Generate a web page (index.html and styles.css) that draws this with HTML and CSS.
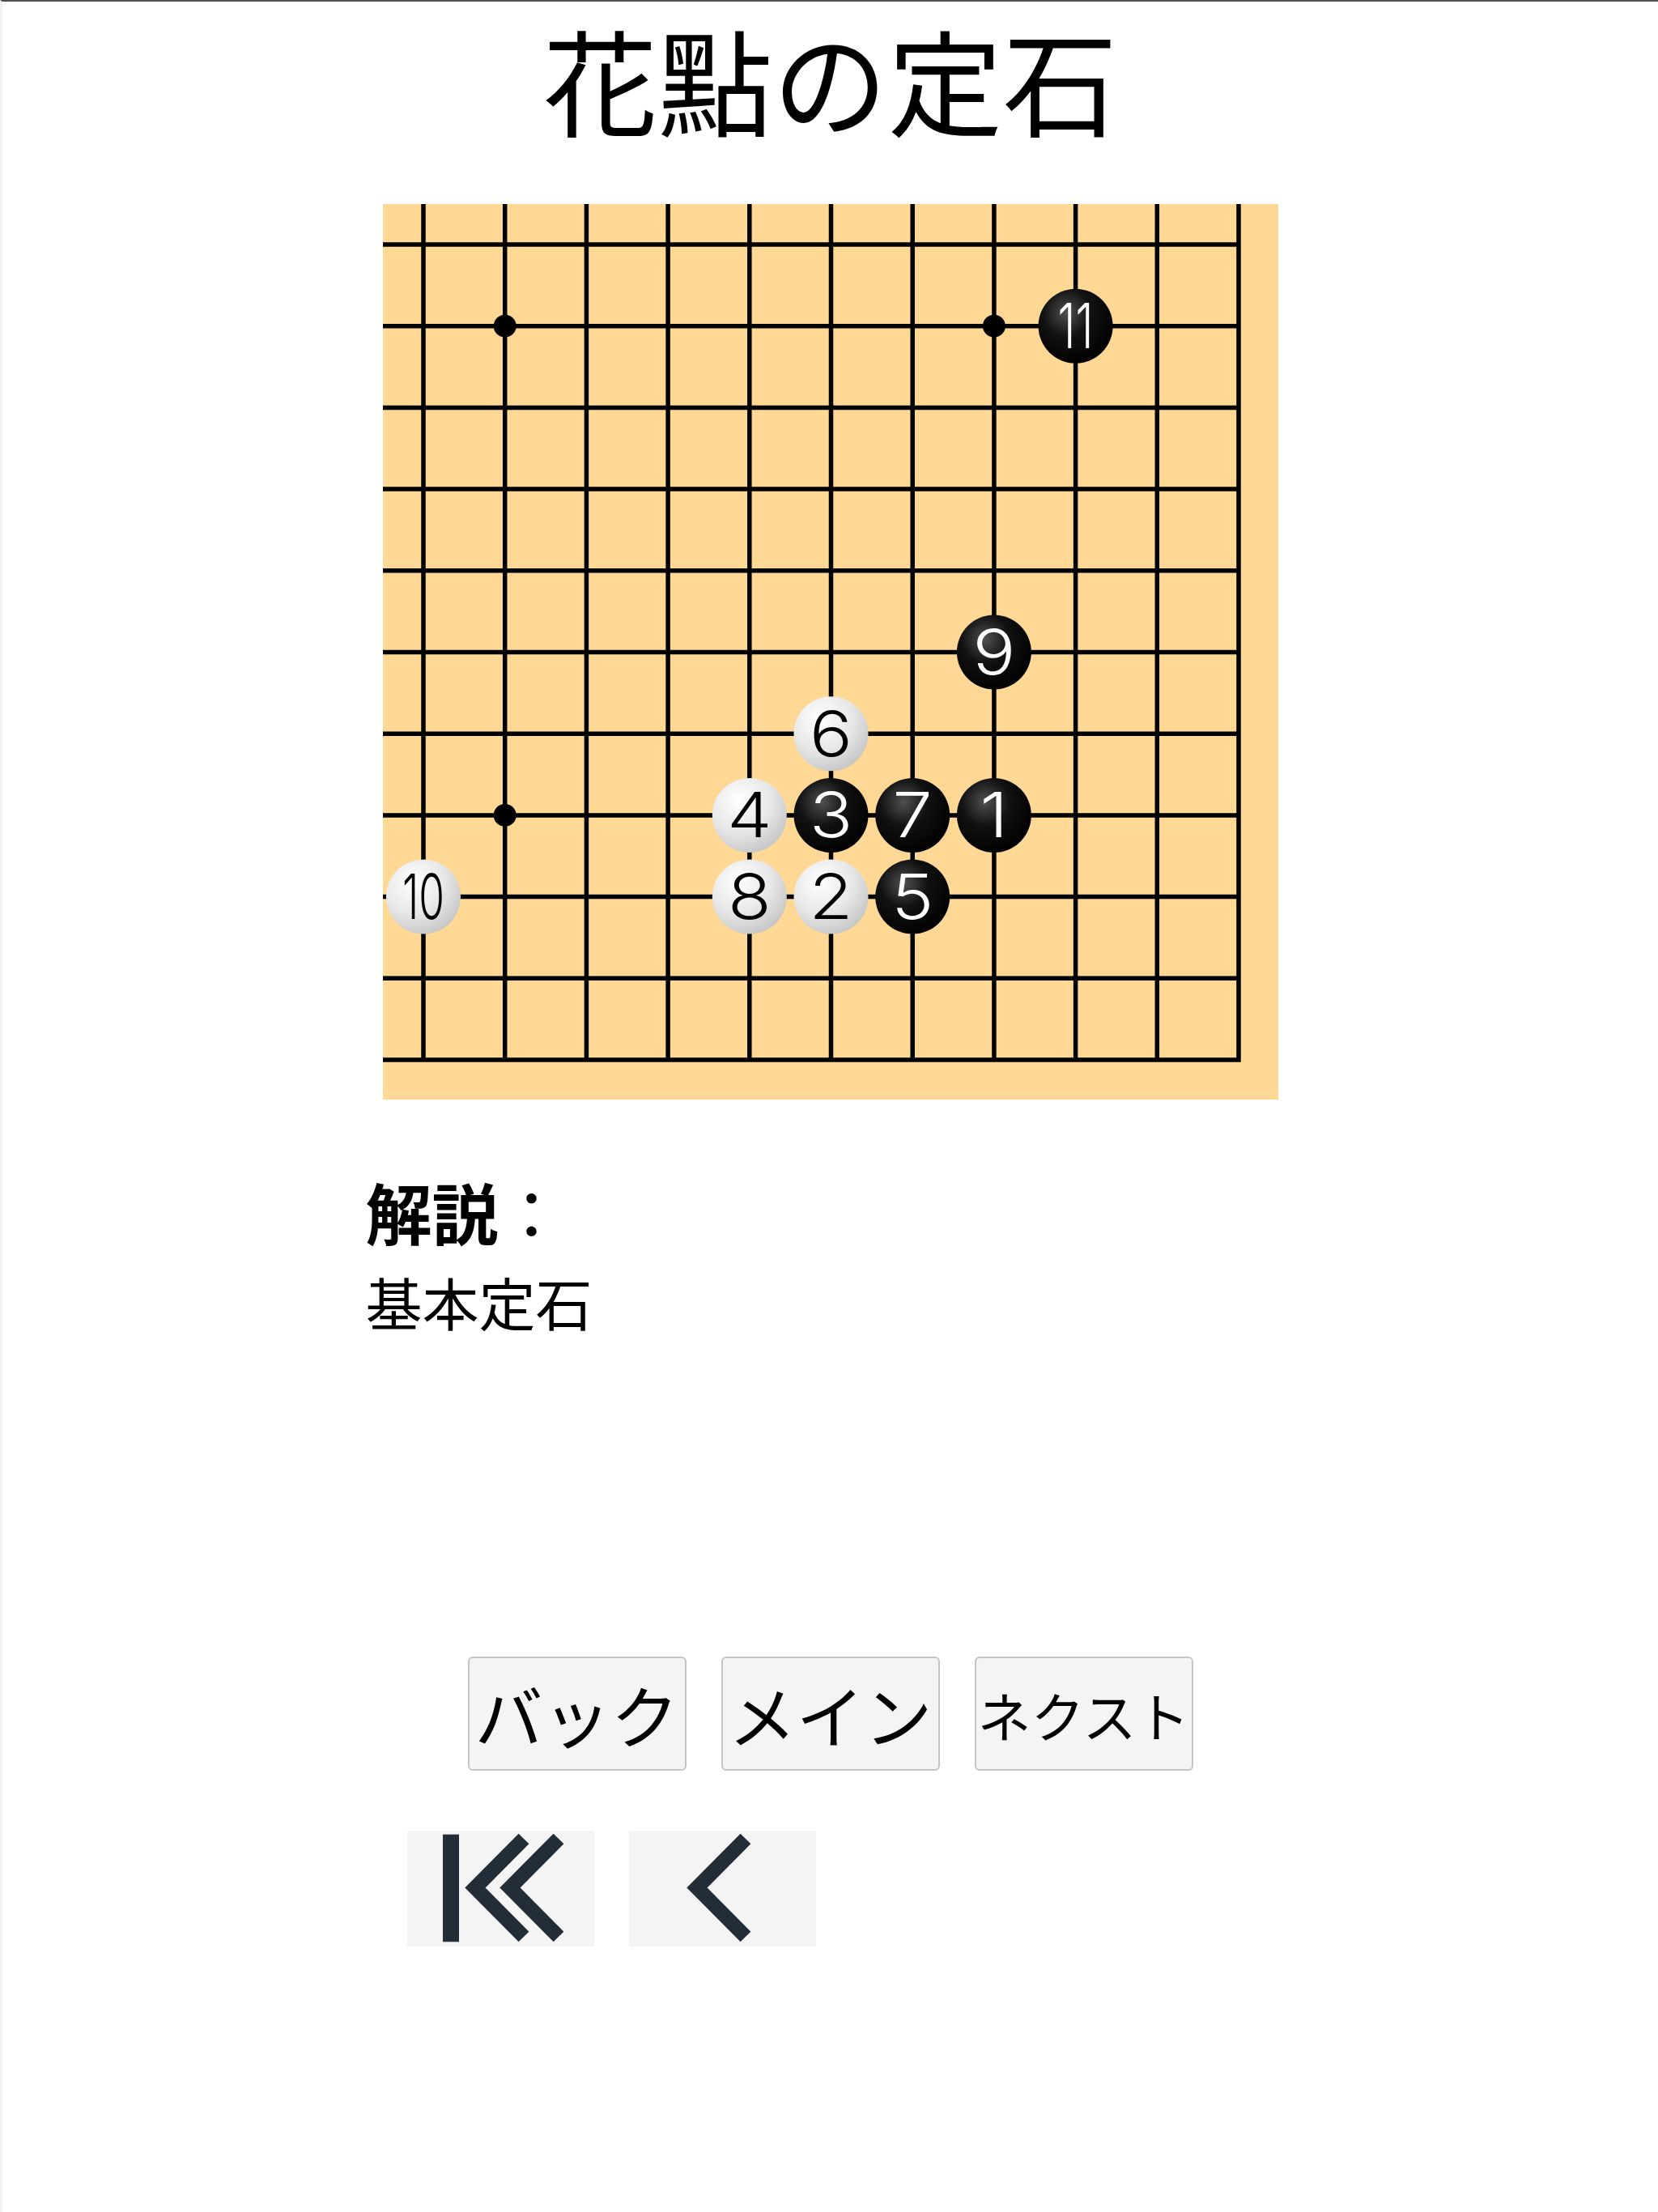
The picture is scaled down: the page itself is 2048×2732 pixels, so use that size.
FILE: index.html
```html
<!DOCTYPE html>
<html lang="ja">
<head>
<meta charset="utf-8">
<title>花點の定石</title>
<link rel="stylesheet" href="styles.css">
</head>
<body>
<div class="page">
  <header class="title-bar">
    <h1 class="title">花點の定石</h1>
  </header>

  <div class="board-wrap">
    <svg class="board" width="1106" height="1106" viewBox="0 0 1106 1106" xmlns="http://www.w3.org/2000/svg">
      <defs>
        <radialGradient id="gB" cx="0.38" cy="0.32" r="0.72">
          <stop offset="0" stop-color="#505050"/>
          <stop offset="0.45" stop-color="#111111"/>
          <stop offset="1" stop-color="#000000"/>
        </radialGradient>
        <radialGradient id="gW" cx="0.36" cy="0.3" r="0.78">
          <stop offset="0" stop-color="#ffffff"/>
          <stop offset="0.55" stop-color="#e7e7e7"/>
          <stop offset="1" stop-color="#c2c2c2"/>
        </radialGradient>
      </defs>
      <rect class="board-bg" x="0" y="0" width="1106" height="1106"/>
      <path class="grid" d="M0 50H1059.75 M0 150.7H1059.75 M0 251.4H1059.75 M0 352.1H1059.75 M0 452.8H1059.75 M0 553.5H1059.75 M0 654.2H1059.75 M0 754.9H1059.75 M0 855.6H1059.75 M0 956.3H1059.75 M0 1057H1059.75 M50 0V1059.75 M150.7 0V1059.75 M251.4 0V1059.75 M352.1 0V1059.75 M452.8 0V1059.75 M553.5 0V1059.75 M654.2 0V1059.75 M754.9 0V1059.75 M855.6 0V1059.75 M956.3 0V1059.75 M1057 0V1059.75"/>
      <circle class="hoshi" cx="150.7" cy="150.7" r="14"/>
      <circle class="hoshi" cx="754.9" cy="150.7" r="14"/>
      <circle class="hoshi" cx="150.7" cy="754.9" r="14"/>

      <circle cx="855.6" cy="150.7" r="46" fill="url(#gB)"/>
      <text class="num num-b num-pair" x="855.6" y="178.2" textLength="44" lengthAdjust="spacingAndGlyphs">11</text>

      <circle cx="754.9" cy="553.5" r="46" fill="url(#gB)"/>
      <text class="num num-b" x="754.9" y="581">9</text>

      <circle cx="553.5" cy="654.2" r="46" fill="url(#gW)"/>
      <text class="num num-w" x="553.5" y="681.7">6</text>

      <circle cx="452.8" cy="754.9" r="46" fill="url(#gW)"/>
      <text class="num num-w" x="452.8" y="782.4">4</text>
      <circle cx="553.5" cy="754.9" r="46" fill="url(#gB)"/>
      <text class="num num-b" x="553.5" y="782.4">3</text>
      <circle cx="654.2" cy="754.9" r="46" fill="url(#gB)"/>
      <text class="num num-b" x="654.2" y="782.4">7</text>
      <circle cx="754.9" cy="754.9" r="46" fill="url(#gB)"/>
      <text class="num num-b" x="754.9" y="782.4">1</text>

      <circle cx="50" cy="855.6" r="46" fill="url(#gW)"/>
      <text class="num num-w num-pair" x="50" y="883.1" textLength="52" lengthAdjust="spacingAndGlyphs">10</text>
      <circle cx="452.8" cy="855.6" r="46" fill="url(#gW)"/>
      <text class="num num-w" x="452.8" y="883.1">8</text>
      <circle cx="553.5" cy="855.6" r="46" fill="url(#gW)"/>
      <text class="num num-w" x="553.5" y="883.1">2</text>
      <circle cx="654.2" cy="855.6" r="46" fill="url(#gB)"/>
      <text class="num num-b" x="654.2" y="883.1">5</text>
    </svg>
  </div>

  <section class="comment">
    <h3 class="comment-head"><span class="comment-label">解説</span>：</h3>
    <p class="comment-body">基本定石</p>
  </section>

  <div class="nav-text">
    <button class="text-btn" type="button">バック</button>
    <button class="text-btn" type="button">メイン</button>
    <button class="text-btn text-btn-small" type="button">ネクスト</button>
  </div>

  <div class="nav-icons">
    <button class="icon-btn" type="button" aria-label="最初へ">
      <svg width="231" height="143" viewBox="0 0 231 143" xmlns="http://www.w3.org/2000/svg">
        <rect class="icon-fill" x="44" y="4.7" width="20" height="132.6"/>
        <polyline class="icon-stroke" points="144,10 84,70.5 144,131"/>
        <polyline class="icon-stroke" points="187,10 127,70.5 187,131"/>
      </svg>
    </button>
    <button class="icon-btn" type="button" aria-label="前へ">
      <svg width="231" height="143" viewBox="0 0 231 143" xmlns="http://www.w3.org/2000/svg">
        <polyline class="icon-stroke" points="144,10 84,70.5 144,131"/>
      </svg>
    </button>
    <button class="icon-btn icon-btn-hidden" type="button" aria-label="次へ"></button>
    <button class="icon-btn icon-btn-hidden" type="button" aria-label="最後へ"></button>
  </div>
</div>
</body>
</html>
```

FILE: styles.css
```css
html, body {
  margin: 0;
  padding: 0;
  background: #ffffff;
}

body {
  font-family: "Noto Sans CJK JP", "Noto Sans", sans-serif;
  color: #000000;
}

.page {
  min-height: 2730px;
  border-top: 2px solid #4f4f4f;
  border-left: 3px solid #f3f3f3;
  display: flex;
  flex-direction: column;
  align-items: center;
}

.title-bar {
  align-self: stretch;
  padding-top: 9px;
  display: flex;
  justify-content: center;
}

.title {
  margin: 0;
  padding: 0 20px;
  font-size: 142px;
  line-height: 170px;
  font-weight: 400;
  text-align: center;
  white-space: nowrap;
}

.board-wrap {
  margin-top: 71px;
  width: 1106px;
  height: 1106px;
}

.board {
  display: block;
}

.board-bg {
  fill: #fed894;
}

.grid {
  stroke: #000000;
  stroke-width: 5.5;
  fill: none;
}

.hoshi {
  fill: #000000;
}

.num {
  font-family: Inter, Roboto, "Liberation Sans", sans-serif;
  font-weight: 300;
  font-size: 77px;
  text-anchor: middle;
  transform-box: fill-box;
  transform-origin: center;
  transform: scaleX(1.14);
}

.num-pair {
  transform: none;
}

.num-b {
  fill: #ffffff;
}

.num-w {
  fill: #000000;
}

.comment {
  width: 1148px;
  margin-top: 97px;
}

.comment-head {
  margin: 0;
  font-size: 82px;
  line-height: 82px;
  font-weight: 400;
}

.comment-label {
  font-weight: 700;
}

.comment-body {
  margin: 36px 0 0;
  font-size: 70px;
  line-height: 70px;
}

.nav-text {
  margin-top: 403px;
  display: flex;
  gap: 43px;
}

.text-btn {
  width: 270px;
  height: 141px;
  box-sizing: border-box;
  padding: 0;
  margin: 0;
  background: #f4f4f4;
  border: 2px solid #c5c5c5;
  border-radius: 6px;
  font-family: "Noto Sans CJK JP", sans-serif;
  font-size: 84px;
  line-height: 1;
  color: #000000;
  display: flex;
  align-items: center;
  justify-content: center;
  white-space: nowrap;
}

.text-btn-small {
  font-size: 66px;
}

.nav-icons {
  margin-top: 74px;
  padding-left: 8px;
  display: flex;
  gap: 43px;
}

.icon-btn {
  width: 231px;
  height: 143px;
  padding: 0;
  margin: 0;
  border: none;
  background: #f4f4f4;
  display: block;
}

.icon-btn svg {
  display: block;
}

.icon-btn-hidden {
  visibility: hidden;
}

.icon-fill {
  fill: #232d37;
}

.icon-stroke {
  fill: none;
  stroke: #232d37;
  stroke-width: 18;
  stroke-linejoin: miter;
  stroke-linecap: butt;
}
```
